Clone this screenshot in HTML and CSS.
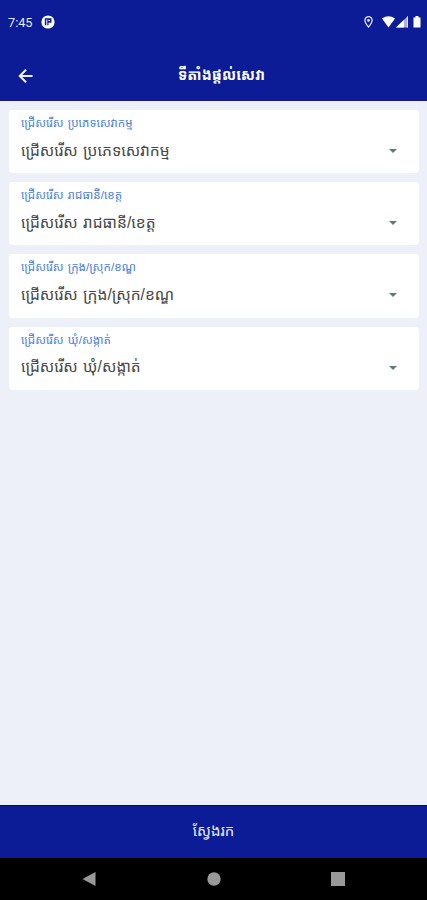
FILE: index.html
```html
<!DOCTYPE html>
<html lang="km">
<head>
  <meta charset="UTF-8">
  <meta name="viewport" content="width=device-width, initial-scale=1.0">
  <title>ទីតាំងផ្តល់សេវា</title>
  <link rel="stylesheet" href="styles.css">
</head>
<body>

  <div class="status-bar">
    <span class="time">7:45</span>
    <svg class="app-icon" width="14" height="14" viewBox="0 0 14 14">
      <circle cx="7" cy="7" r="6.6" fill="#fff"/>
      <path d="M3.800 3.200h6.700v4.600H7.500v2.400H3.800z" fill="#0b1c96"/>
      <path d="M5.800 4.600v6M7.500 5.500h1.500" stroke="#fff" stroke-width="1"/>
    </svg>
    <svg class="status-icons" width="60" height="14" viewBox="0 0 60 14">
      <path d="M6.500 1.700a3.600 3.600 0 0 0-3.600 3.600C2.900 8 6.500 12 6.500 12s3.600-4 3.600-6.700A3.600 3.600 0 0 0 6.500 1.700z" fill="none" stroke="#dfe3fa" stroke-width="1.300"/>
      <circle cx="6.500" cy="5.400" r="1.400" fill="#dfe3fa"/>
      <path d="M20 3.500q6.500-4.600 13 0L26.500 12.500z" fill="#fff"/>
      <path d="M46 1v11.500H34z" fill="#a9b0dc"/>
      <path d="M42 4.800v7.700h-8z" fill="#fff"/>
      <path d="M45.500 1.500v11" stroke="#dfe3fa"/>
      <path d="M51.500 2.500h2V1h3v1.500h2v10h-7z" fill="#fff"/>
    </svg>
  </div>

  <header class="app-bar">
    <svg class="back" width="16" height="16" viewBox="0 0 16 16">
      <path d="M8 2.800L1.800 9L8 15.200M2 9h12.500" fill="none" stroke="#eceffc" stroke-width="2.100"/>
    </svg>
    <h1 class="title">ទីតាំងផ្តល់សេវា</h1>
  </header>

  <main class="content">
    <div class="field">
      <div class="label">ជ្រើសរើស ប្រភេទសេវាកម្ម</div>
      <div class="value"><span>ជ្រើសរើស ប្រភេទសេវាកម្ម</span><i class="arrow"></i></div>
    </div>
    <div class="field">
      <div class="label">ជ្រើសរើស រាជធានី/ខេត្ត</div>
      <div class="value"><span>ជ្រើសរើស រាជធានី/ខេត្ត</span><i class="arrow"></i></div>
    </div>
    <div class="field">
      <div class="label">ជ្រើសរើស ក្រុង/ស្រុក/ខណ្ឌ</div>
      <div class="value"><span>ជ្រើសរើស ក្រុង/ស្រុក/ខណ្ឌ</span><i class="arrow"></i></div>
    </div>
    <div class="field">
      <div class="label">ជ្រើសរើស ឃុំ/សង្កាត់</div>
      <div class="value"><span>ជ្រើសរើស ឃុំ/សង្កាត់</span><i class="arrow"></i></div>
    </div>
  </main>

  <button class="search">ស្វែងរក</button>

  <nav class="nav-bar">
    <svg width="14" height="16" viewBox="0 0 14 16"><path d="M0.500 8L13.500 1v14z" fill="#999"/></svg>
    <svg width="14" height="16" viewBox="0 0 14 16"><circle cx="7" cy="8" r="6.700" fill="#999"/></svg>
    <svg width="14" height="16" viewBox="0 0 14 16"><path d="M0 1h14v14H0z" fill="#999"/></svg>
  </nav>

</body>
</html>
```
FILE: styles.css
```css
* {
  box-sizing: border-box;
}

body {
  margin: 0;
  height: 900px;
  display: flex;
  flex-direction: column;
  background: #edf0f9;
  font-family: "Liberation Sans", "Noto Sans Khmer", "DejaVu Sans", sans-serif;
  overflow: hidden;
}

.status-bar {
  display: flex;
  align-items: center;
  height: 50px;
  padding: 0 5px 6px 8px;
  background: #0b1c96;
  color: #e6e9fa;
}

.time {
  width: 33px;
  font-family: Roboto, sans-serif;
  font-size: 12.7px;
}

.status-icons {
  margin-left: auto;
}

.app-bar {
  display: grid;
  grid-template-columns: 30px 1fr 18px;
  align-items: center;
  height: 51px;
  padding: 0 14px 0 18px;
  background: #0b1c96;
  border-bottom: 1px solid #1a1a87;
}

.title {
  margin: 0;
  color: #fff;
  font-size: 14.7px;
  font-weight: 700;
  line-height: 20px;
  text-align: center;
  white-space: nowrap;
}

.content {
  flex: 1;
  display: flex;
  flex-direction: column;
  gap: 9px;
  padding: 9px 8px 0 9px;
}

.field {
  height: 63.2px;
  padding: 4px 22px 0 12px;
  background: #fff;
  border-radius: 4px;
  white-space: nowrap;
}

.label {
  height: 20px;
  color: #4a80e0;
  font-size: 11.7px;
  line-height: 17px;
  word-spacing: 1px;
}

.value {
  display: flex;
  align-items: center;
  justify-content: space-between;
  height: 34px;
  color: #484848;
  font-size: 15.6px;
  line-height: 31px;
  word-spacing: 1px;
}

.value span {
  padding-bottom: 2px;
}

.arrow {
  border: 4px solid transparent;
  border-top-color: #5d7b7b;
  border-bottom: 0;
}

.search {
  height: 53px;
  padding: 0 0 4px;
  border: 0;
  border-top: 1px solid #04047c;
  background: #0b1c96;
  color: #e6e9fa;
  font: inherit;
  font-size: 15px;
}

.nav-bar {
  display: flex;
  justify-content: space-between;
  align-items: center;
  height: 42px;
  padding: 0 82px;
  background: #000;
}
```
